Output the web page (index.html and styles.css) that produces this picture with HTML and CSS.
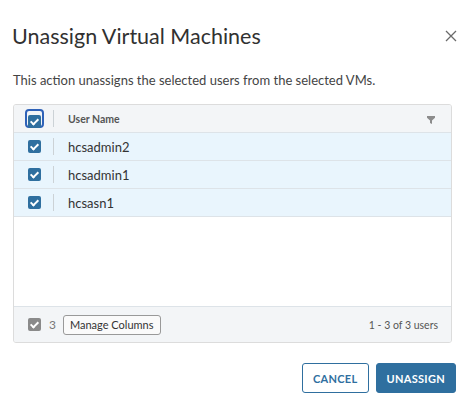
FILE: index.html
```html
<!DOCTYPE html>
<html lang="en">
  <head>
    <meta charset="UTF-8" />
    <meta name="viewport" content="width=device-width, initial-scale=1.0" />
    <title>Unassign Virtual Machines</title>
    <link rel="stylesheet" href="styles.css">
  </head>
  <body>
    <div class="modal">
      <div class="modal-header">
        <h3 class="modal-title">Unassign Virtual Machines</h3>
        <button class="close" aria-label="Close">
          <svg width="12" height="12" viewBox="0 0 12 12">
            <path d="M1 1L11 11M11 1L1 11" stroke="#6a6a6a" stroke-width="1.3" fill="none" />
          </svg>
        </button>
      </div>
      <p class="modal-text">This action unassigns the selected users from the selected VMs.</p>

      <div class="datagrid">
        <div class="dg-row dg-head">
          <div class="dg-select">
            <span class="check check-focus"><span class="check checked"></span></span>
          </div>
          <div class="dg-cell dg-head-cell">
            <span>User Name</span>
            <!-- column filter funnel -->
            <svg class="filter" width="8" height="8" viewBox="0 0 8 8">
              <path d="M0 0H8V1.8L5 4.6V8L3 7V4.6L0 1.8Z" fill="#8c8c8c" />
            </svg>
          </div>
        </div>
        <div class="dg-row selected">
          <div class="dg-select"><span class="check checked"></span></div>
          <div class="dg-cell">hcsadmin2</div>
        </div>
        <div class="dg-row selected">
          <div class="dg-select"><span class="check checked"></span></div>
          <div class="dg-cell">hcsadmin1</div>
        </div>
        <div class="dg-row selected">
          <div class="dg-select"><span class="check checked"></span></div>
          <div class="dg-cell">hcsasn1</div>
        </div>
        <div class="dg-empty"></div>
        <div class="dg-footer">
          <span class="check checked grey"></span>
          <span class="count">3</span>
          <button class="btn-columns">Manage Columns</button>
          <span class="pagination">1 - 3 of 3 users</span>
        </div>
      </div>

      <div class="modal-footer">
        <button class="btn btn-outline">Cancel</button>
        <button class="btn btn-primary">Unassign</button>
      </div>
    </div>
  </body>
</html>
```

FILE: styles.css
```css
body {
  margin: 0;
  background: #fff;
  font-family: "Lato", "Open Sans", sans-serif;
  color: #333;
}
.modal {
  width: 466px;
  height: 400px;
  padding: 0 14px 0 13px;
  box-sizing: border-box;
}
.modal-header {
  display: flex;
  align-items: center;
  justify-content: space-between;
  padding-top: 24px;
}
.modal-title {
  margin: 0;
  font-size: 21.5px;
  line-height: 24px;
  font-weight: 400;
  color: #313131;
  margin-left: -1px;
}
.close {
  border: none;
  background: none;
  padding: 0;
  margin-right: -5px;
  display: flex;
}
.modal-text {
  margin: 23px 0 0;
  font-size: 13px;
  line-height: 18px;
  color: #444;
}
.datagrid {
  margin-top: 15px;
  border: 1px solid #dcdcdc;
  border-radius: 3px;
  height: 237px;
  display: flex;
  flex-direction: column;
  overflow: hidden;
}
.dg-row {
  display: flex;
  height: 28px;
  border-bottom: 1px solid #dde3e8;
  box-sizing: border-box;
}
.dg-head {
  background: #f3f5f7;
}
.selected {
  background: #e9f5fd;
}
.dg-select {
  width: 40px;
  display: flex;
  align-items: center;
  justify-content: center;
  position: relative;
}
.dg-select::after {
  content: "";
  position: absolute;
  right: 0;
  top: 5px;
  bottom: 5px;
  border-right: 1px solid #ccd2d6;
}
.dg-cell {
  flex: 1;
  display: flex;
  align-items: center;
  padding-left: 14px;
  font-size: 13px;
  color: #333;
}
.dg-head-cell {
  font-size: 10.5px;
  font-weight: 700;
  color: #555;
  justify-content: space-between;
  padding-right: 16px;
}
.filter {
  margin-top: 2px;
}
.check {
  display: inline-block;
  width: 13px;
  height: 13px;
  border-radius: 2px;
  box-sizing: border-box;
  position: relative;
}
.checked {
  background: #2f6f9f;
}
.checked::after {
  content: "";
  position: absolute;
  left: 4px;
  top: 2px;
  width: 3px;
  height: 6px;
  border: solid #fff;
  border-width: 0 2px 2px 0;
  transform: rotate(45deg);
}
.check-focus {
  width: 19px;
  height: 19px;
  border: 2px solid #2f62b8;
  border-radius: 4px;
  padding: 1px;
}
.grey {
  background: #8a8a8a;
}
.dg-empty {
  flex: 1;
  border-bottom: 1px solid #dde3e8;
}
.dg-footer {
  height: 35px;
  background: #f3f5f7;
  display: flex;
  align-items: center;
  padding: 0 13px 0 14px;
  font-size: 10.5px;
  color: #555;
}
.count {
  margin-left: 8px;
  font-size: 12px;
  color: #777;
}
.btn-columns {
  margin-left: 7px;
  height: 20px;
  padding: 0 6px;
  border: 1px solid #999;
  border-radius: 3px;
  background: #fafafa;
  font-family: inherit;
  font-size: 11px;
  color: #333;
}
.pagination {
  margin-left: auto;
}
.modal-footer {
  display: flex;
  justify-content: flex-end;
  gap: 7px;
  margin-top: 20px;
  margin-right: -4px;
}
.btn {
  height: 30px;
  border-radius: 3px;
  font-family: inherit;
  font-size: 11px;
  font-weight: 700;
  letter-spacing: 0.3px;
  text-transform: uppercase;
  padding: 0 10px;
}
.btn-outline {
  background: #fff;
  border: 1px solid #2f6f9f;
  color: #2f6f9f;
}
.btn-primary {
  background: #2f6f9f;
  border: 1px solid #2f6f9f;
  color: #fff;
}
```
